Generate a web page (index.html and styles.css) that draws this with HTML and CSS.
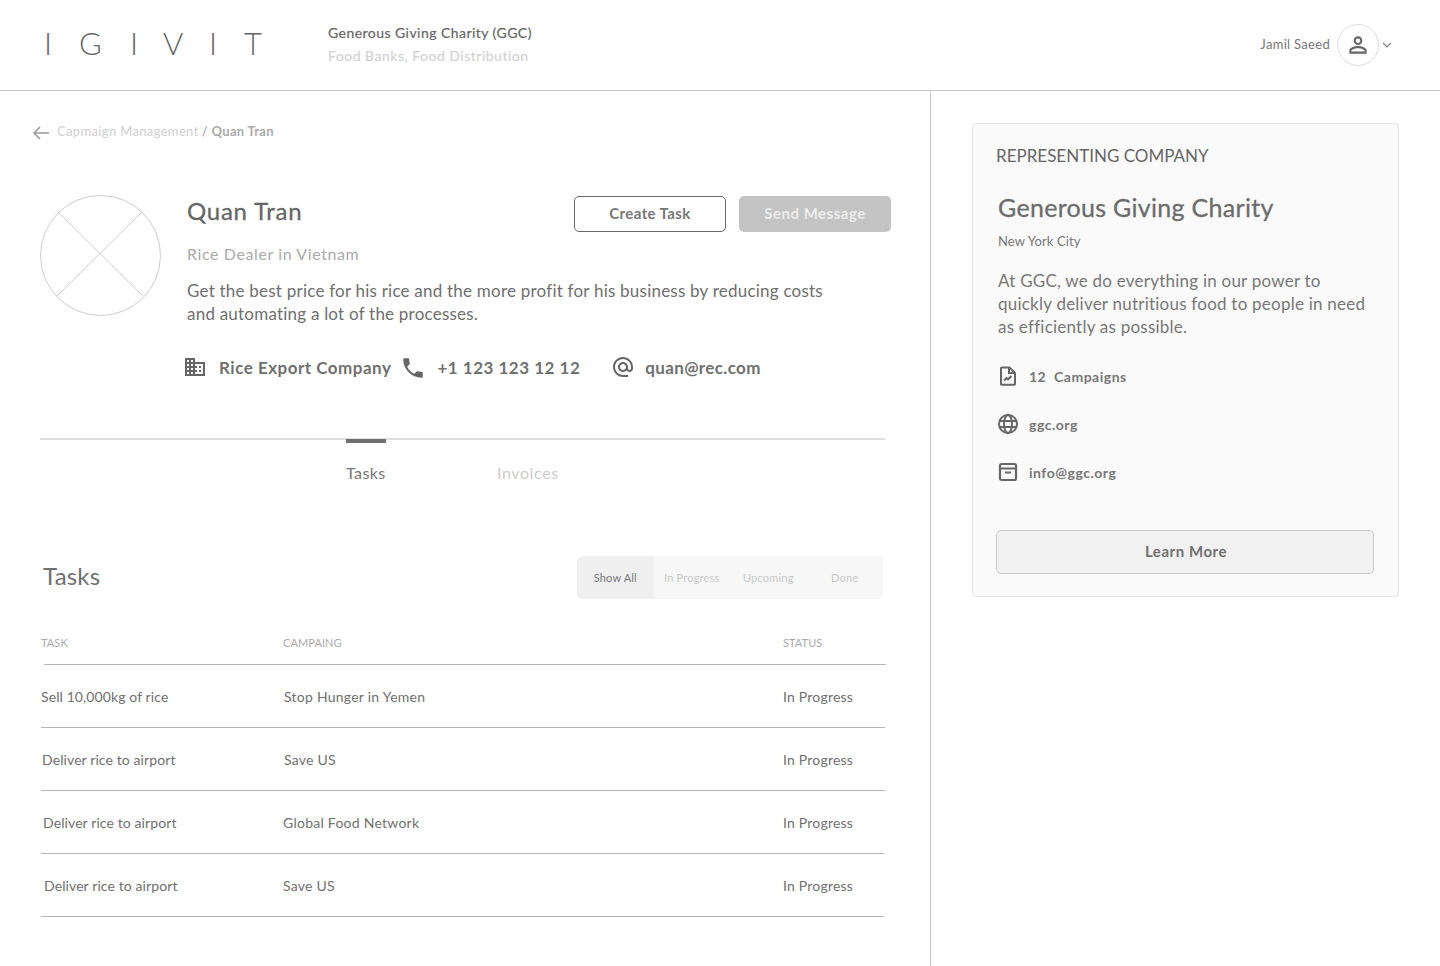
FILE: index.html
```html
<!DOCTYPE html>
<html lang="en">
<head>
<meta charset="utf-8">
<title>Quan Tran</title>
<link rel="stylesheet" href="styles.css">
</head>
<body>
<header class="topbar">
  <div class="logo"><span>I</span><span>G</span><span>I</span><span>V</span><span>I</span><span>T</span></div>
  <div class="org">
    <div class="org-name">Generous Giving Charity (GGC)</div>
    <div class="org-type">Food Banks, Food Distribution</div>
  </div>
  <div class="user">
    <span class="user-name">Jamil Saeed</span>
    <span class="user-avatar">
      <svg width="26" height="26" viewBox="0 0 24 24" fill="#666"><path d="M12 5.900a2.100 2.100 0 1 1 0 4.200 2.100 2.100 0 0 1 0-4.200m0 9c2.970 0 6.100 1.460 6.100 2.100v1.100H5.900V17c0-.64 3.130-2.100 6.100-2.100M12 4C9.790 4 8 5.790 8 8s1.790 4 4 4 4-1.790 4-4-1.790-4-4-4zm0 9c-2.670 0-8 1.340-8 4v3h16v-3c0-2.660-5.330-4-8-4z"/></svg>
    </span>
    <svg class="chev" width="10" height="6" viewBox="0 0 10 6" fill="none"><path d="M1 1l4 4 4-4" stroke="#888" stroke-width="1.200"/></svg>
  </div>
</header>
<div class="layout">
  <main class="main">
    <nav class="crumbs">
      <svg width="17" height="14" viewBox="0 0 17 14" fill="none"><path d="M17 7H2M8 1L2 7l6 6" stroke="#999" stroke-width="1.500"/></svg>
      <span class="crumb-link">Capmaign Management</span>
      <span class="crumb-sep">/</span>
      <span class="crumb-now">Quan Tran</span>
    </nav>
    <section class="profile">
      <svg class="photo" width="121" height="121" viewBox="0 0 121 121" fill="none"><circle cx="60.500" cy="60.500" r="60" stroke="#ccc"/><path d="M18 17l85 84M102 17L17 101" stroke="#ccc"/></svg>
      <div class="profile-body">
        <div class="name-row">
          <h1 class="name">Quan Tran</h1>
          <div class="actions">
            <button class="btn btn-outline">Create Task</button>
            <button class="btn btn-solid">Send Message</button>
          </div>
        </div>
        <p class="role">Rice Dealer in Vietnam</p>
        <p class="bio">Get the best price for his rice and the more profit for his business by reducing costs and automating a lot of the processes.</p>
        <div class="contacts">
          <span class="contact c-company">
            <svg width="24" height="24" viewBox="0 0 24 24" fill="#666"><path d="M12 7V3H2v18h20V7H12zM6 19H4v-2h2v2zm0-4H4v-2h2v2zm0-4H4V9h2v2zm0-4H4V5h2v2zm4 12H8v-2h2v2zm0-4H8v-2h2v2zm0-4H8V9h2v2zm0-4H8V5h2v2zm10 12h-8v-2h2v-2h-2v-2h2v-2h-2V9h8v10zm-2-8h-2v2h2v-2zm0 4h-2v2h2v-2z"/></svg>
            Rice Export Company
          </span>
          <span class="contact c-phone">
            <svg width="26" height="26" viewBox="0 0 24 24" fill="#666"><path d="M6.620 10.790c1.440 2.830 3.760 5.140 6.590 6.590l2.200-2.200c.27-.27.67-.36 1.020-.24 1.120.37 2.330.57 3.570.57.55 0 1 .45 1 1V20c0 .55-.45 1-1 1-9.390 0-17-7.610-17-17 0-.55.45-1 1-1h3.500c.55 0 1 .45 1 1 0 1.250.2 2.450.57 3.570.11.35.03.74-.25 1.020l-2.200 2.200z"/></svg>
            +1 123 123 12 12
          </span>
          <span class="contact c-mail">
            <svg width="24" height="24" viewBox="0 0 24 24" fill="#666"><path d="M12 2C6.480 2 2 6.480 2 12s4.480 10 10 10h5v-2h-5c-4.340 0-8-3.660-8-8s3.660-8 8-8 8 3.660 8 8v1.430c0 .79-.71 1.570-1.500 1.570s-1.500-.78-1.500-1.570V12c0-2.760-2.240-5-5-5s-5 2.240-5 5 2.240 5 5 5c1.380 0 2.640-.56 3.540-1.470.65.89 1.770 1.470 2.960 1.470 1.970 0 3.500-1.600 3.500-3.570V12c0-5.520-4.480-10-10-10zm0 13c-1.660 0-3-1.340-3-3s1.340-3 3-3 3 1.340 3 3-1.340 3-3 3z"/></svg>
            quan@rec.com
          </span>
        </div>
      </div>
    </section>
    <div class="tabs">
      <a class="tab tab-on">Tasks</a>
      <a class="tab tab-off">Invoices</a>
    </div>
    <section class="tasks">
      <div class="tasks-head">
        <h2 class="tasks-title">Tasks</h2>
        <div class="filters">
          <span class="filter filter-on">Show All</span>
          <span class="filter">In Progress</span>
          <span class="filter">Upcoming</span>
          <span class="filter">Done</span>
        </div>
      </div>
      <div class="thead">
        <span class="col-a">Task</span><span class="col-b">Campaing</span><span class="col-c">Status</span>
      </div>
      <div class="row r1"><span class="col-a">Sell 10,000kg of rice</span><span class="col-b">Stop Hunger in Yemen</span><span class="col-c">In Progress</span></div>
      <div class="row r2"><span class="col-a">Deliver rice to airport</span><span class="col-b">Save US</span><span class="col-c">In Progress</span></div>
      <div class="row r3"><span class="col-a">Deliver rice to airport</span><span class="col-b">Global Food Network</span><span class="col-c">In Progress</span></div>
      <div class="row r4"><span class="col-a">Deliver rice to airport</span><span class="col-b">Save US</span><span class="col-c">In Progress</span></div>
    </section>
  </main>
  <aside class="side">
    <div class="card">
      <h3 class="card-label">REPRESENTING COMPANY</h3>
      <h2 class="card-title">Generous Giving Charity</h2>
      <p class="card-city">New York City</p>
      <p class="card-text">At GGC, we do everything in our power to quickly deliver nutritious food to people in need as efficiently as possible.</p>
      <ul class="facts">
        <li class="fact">
          <svg width="20" height="20" viewBox="0 0 20 20" fill="none" stroke="#666" stroke-width="2"><path d="M3.800 1.500h7.700l5.500 5.500v11a.8.8 0 0 1-.8.8H3.800a.8.8 0 0 1-.8-.8V2.300a.8.8 0 0 1 .8-.8z" stroke-linejoin="round"/><path d="M11 1.500V7h6"/><path d="M6 14.500l2.500-2.500 1.500 1.300 3.500-3.300"/></svg>
          <span>12&nbsp; Campaigns</span>
        </li>
        <li class="fact">
          <svg width="20" height="20" viewBox="0 0 20 20" fill="none" stroke="#666" stroke-width="2"><circle cx="10" cy="10" r="9"/><ellipse cx="10" cy="10" rx="4" ry="9"/><path d="M1.500 7h17M1.500 13h17"/></svg>
          <span>ggc.org</span>
        </li>
        <li class="fact">
          <svg width="20" height="20" viewBox="0 0 20 20" fill="none" stroke="#666" stroke-width="2.200"><rect x="2" y="2" width="16" height="16" rx="1.500"/><path d="M2 6.500h16M7 10.500h6"/></svg>
          <span>info@ggc.org</span>
        </li>
      </ul>
      <button class="learn">Learn More</button>
    </div>
  </aside>
</div>
</body>
</html>
```

FILE: styles.css
```css
* { box-sizing: border-box; }
html, body { margin: 0; padding: 0; }
body {
  width: 1440px;
  height: 966px;
  overflow: hidden;
  background: #fff;
  color: #666;
  font-family: "Lato", "Liberation Sans", sans-serif;
}
h1, h2, h3, p, ul { margin: 0; padding: 0; font-weight: 400; }
ul { list-style: none; }
button { font-family: inherit; cursor: pointer; }

.topbar {
  height: 91px;
  border-bottom: 1px solid #c8c8c8;
  display: flex;
  align-items: center;
  padding: 0 48px 0 44px;
}
.logo {
  width: 284px;
  display: flex;
  font-size: 31px;
  font-weight: 300;
  color: #666;
  padding-bottom: 4px;
}
.logo span:nth-child(1) { width: 35px; }
.logo span:nth-child(2) { width: 51px; }
.logo span:nth-child(3) { width: 33px; }
.logo span:nth-child(4) { width: 46px; }
.logo span:nth-child(5) { width: 35px; }
.org { padding-bottom: 2px; }
.org-name { font-size: 14px; line-height: 20px; color: #666; margin-bottom: 3px; letter-spacing: .45px; -webkit-text-stroke: .2px #666; }
.org-type { font-size: 14px; line-height: 20px; color: #d2d2d2; letter-spacing: .5px; -webkit-text-stroke: .2px #d2d2d2; }
.user { margin-left: auto; display: flex; align-items: center; }
.user-name { font-size: 13px; color: #777; margin: 0 7px 2px 0; letter-spacing: .3px; }
.user-avatar {
  width: 42px; height: 42px;
  border: 1px solid #ddd;
  border-radius: 50%;
  display: flex; align-items: center; justify-content: center;
}
.chev { margin-left: 3px; }

.layout { display: flex; height: 875px; }
.main {
  width: 931px;
  border-right: 1px solid #c8c8c8;
  padding: 33px 0 0 40px;
}
.side { flex: 1; padding: 32px 41px 0; }

.crumbs {
  display: flex; align-items: center;
  margin-left: -8px;
  height: 16px;
  padding-bottom: 2px;
  font-size: 13px;
}
.crumbs svg { margin-right: 8px; margin-top: 4px; }
.crumb-link { color: #cfcfcf; letter-spacing: .35px; }
.crumb-sep { color: #999; margin: 0 4px 0 3px; }
.crumb-now { color: #aaa; font-weight: 700; letter-spacing: .3px; }

.profile { display: flex; margin-top: 55px; }
.photo { flex: none; margin-right: 26px; }
.profile-body { flex: 1; padding-top: 1px; }
.name-row { display: flex; justify-content: space-between; height: 36px; padding-right: 39px; }
.name { font-size: 24px; line-height: 30px; letter-spacing: .75px; -webkit-text-stroke: .3px #666; }
.actions { display: flex; gap: 13px; }
.btn {
  width: 152px; height: 36px;
  border-radius: 5px;
  font-size: 15px;
  font-weight: 700;
  padding: 0 0 2px;
}
.btn-outline { background: #fff; border: 1px solid #6a6a6a; color: #777; letter-spacing: .4px; }
.btn-solid { background: #c4c4c4; border: 0; color: #ececec; letter-spacing: .5px; }
.role { margin-top: 10px; font-size: 16px; line-height: 23px; color: #aaa; letter-spacing: .6px; }
.bio { margin-top: 14px; width: 650px; font-size: 17px; line-height: 23px; color: #6f6f6f; letter-spacing: .22px; }
.contacts { display: flex; align-items: center; margin-top: 30px; height: 24px; font-size: 17px; font-weight: 700; color: #707070; letter-spacing: .5px; }
.contact { display: flex; align-items: center; }
.c-company svg { margin: 0 12px 0 -4px; }
.c-phone { margin-left: 10px; }
.c-phone svg { margin: 1px 11px 0 -1px; }
.c-mail { margin-left: 31px; letter-spacing: .35px; }
.c-mail svg { margin-right: 10px; }

.tabs {
  width: 845px;
  margin-top: 59px;
  border-top: 2px solid #dedede;
  display: flex;
  padding-left: 306px;
}
.tab { font-size: 16px; line-height: 22px; display: block; }
.tab-on {
  color: #777;
  margin-top: -1px;
  border-top: 4px solid #707070;
  padding-top: 19px;
  width: 40px;
  letter-spacing: .4px;
}
.tab-off { color: #ccc; margin-left: 111px; padding-top: 22px; letter-spacing: .6px; }

.tasks { width: 846px; margin-top: 72px; }
.tasks-head { display: flex; justify-content: space-between; align-items: center; height: 43px; padding-right: 3px; }
.tasks-title { font-size: 24px; color: #707070; margin: 0 0 4px 3px; letter-spacing: .2px; }
.filters { width: 306px; height: 43px; background: #f7f7f7; border-radius: 6px; display: flex; }
.filter { flex: 1; display: flex; align-items: center; justify-content: center; font-size: 11px; color: #c8c8c8; letter-spacing: .2px; padding-bottom: 1px; }
.filter-on { background: #efefef; color: #777; border-radius: 6px 0 0 6px; }

.thead {
  display: flex; align-items: center;
  height: 66px;
  padding: 22px 0 0 1px;
  margin-left: 4px;
  border-bottom: 1px solid #b5b5b5;
  font-size: 11px;
  text-transform: uppercase;
  color: #aaa;
  letter-spacing: .08px;
}
.thead .col-a { width: 242px; margin-left: -4px; }
.thead .col-b { width: 500px; }
.row {
  display: flex; align-items: center;
  height: 63px;
  margin-left: 1px;
  border-bottom: 1px solid #b5b5b5;
  font-size: 14px;
  color: #707070;
  letter-spacing: .2px;
}
.row .col-a { width: 242px; letter-spacing: .1px; }
.row .col-b { width: 500px; letter-spacing: .25px; }
.r1 { width: 844px; }
.r1 .col-b { margin-left: 1px; width: 499px; }
.r2 { width: 844px; }
.r2 .col-a { margin-left: 1px; width: 241px; }
.r2 .col-b { margin-left: 1px; width: 499px; }
.r3 { width: 843px; }
.r3 .col-a { margin-left: 2px; width: 240px; }
.r4 { width: 843px; }
.r4 .col-a { margin-left: 3px; width: 239px; }

.card {
  height: 474px;
  width: 427px;
  background: #fafafa;
  border: 1px solid #e6e6e6;
  border-radius: 4px;
  padding: 20px 24px 0 23px;
}
.card-label { font-size: 17px; line-height: 24px; color: #666; }
.card-title { margin: 23px 0 0 2px; font-size: 25px; line-height: 32px; letter-spacing: .3px; color: #6c6c6c; -webkit-text-stroke: .3px #6c6c6c; }
.card-city { margin: 9px 0 0 2px; font-size: 13px; line-height: 18px; color: #777; letter-spacing: .1px; }
.card-text { margin: 19px 0 0 2px; font-size: 17px; line-height: 23px; color: #777; letter-spacing: .23px; }
.facts { margin: 14px 0 0 2px; }
.fact { display: flex; align-items: center; height: 48px; font-size: 14px; font-weight: 700; color: #777; letter-spacing: .5px; }
.fact svg { margin-right: 11px; flex: none; }
.learn {
  display: block;
  margin-top: 34px;
  width: 378px; height: 44px;
  background: #f1f1f1;
  border: 1px solid #c9c9c9;
  border-radius: 5px;
  font-size: 15px;
  font-weight: 700;
  color: #707070;
  letter-spacing: .55px;
  padding: 0 0 2px 2px;
}
```
